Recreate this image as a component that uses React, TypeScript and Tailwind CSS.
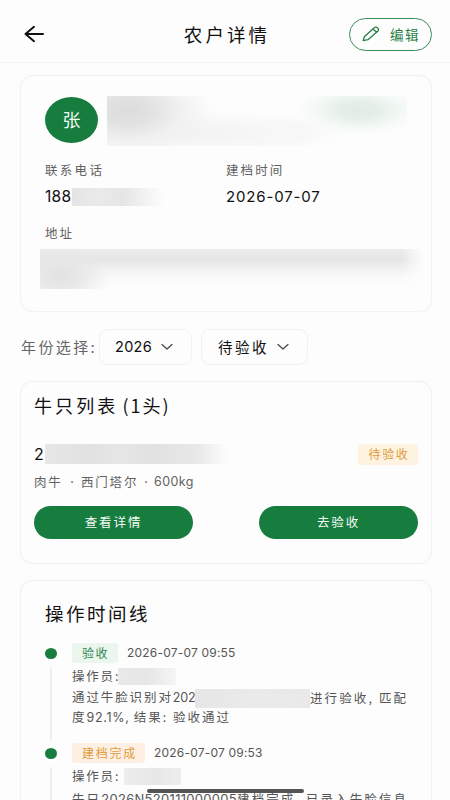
import type { ReactNode } from 'react';

const latin = "font-['Inter','Noto_Sans_CJK_SC',sans-serif]";

function Card({ className, children }: { className: string; children: ReactNode }) {
  return (
    <section className={`ml-5 w-[412px] rounded-[13px] border border-[#f2f2f2] bg-[#fdfdfd] shadow-[0_0_2px_#f5f5f5] ${className}`}>
      {children}
    </section>
  );
}

function Chevron() {
  return (
    <svg width="12" height="8" viewBox="0 0 12 8" fill="none" stroke="#444" strokeWidth="1.2" strokeLinecap="round" strokeLinejoin="round">
      <path d="M1 1.5 6 6l5-4.5" />
    </svg>
  );
}

function Redacted({ className }: { className: string }) {
  return <span aria-hidden="true" className={`block shrink-0 ${className}`} />;
}

function Dot() {
  return <span className="block h-[11px] w-[12px] shrink-0 rounded-[50%] bg-[#177d3e]" />;
}

export default function App() {
  return (
    <div className="relative h-[800px] w-[450px] overflow-hidden bg-[#fdfdfd] font-['Noto_Sans_CJK_SC',sans-serif] text-[#111]">
      <header className="flex h-[63px] items-center justify-between border-b border-[#f3f3f3] pt-[6px] pr-[18px] pl-6">
        <button className="flex w-[83px] items-center" aria-label="返回">
          <svg width="21" height="18" viewBox="0 0 21 18" fill="none" stroke="#111" strokeWidth="2" strokeLinecap="round" strokeLinejoin="round">
            <path d="M19 9H1.5M10 1.8 1.5 9l8.5 7.2" />
          </svg>
        </button>
        <h1 className="mr-[2px] text-[18.5px] leading-6 font-normal tracking-[3.1px]">农户详情</h1>
        <button className="flex h-[33px] w-[83px] items-center rounded-full border border-[#3b8d5a] pl-3 text-[#277f48]">
          <svg width="18" height="16" viewBox="0 0 18 16" fill="none" stroke="currentColor" strokeWidth="1.3" strokeLinejoin="round" strokeLinecap="round">
            <path d="M1.2 14.7 2.3 10.8 12 2c1-.9 2.7-.9 3.7 0s1 2.4 0 3.3L6 13.7 1.2 14.7ZM11 3l3.6 3.3" />
          </svg>
          <span className="ml-[10px] text-[13.5px] leading-5 tracking-[1.6px]">编辑</span>
        </button>
      </header>

      <Card className="mt-[12px] h-[237px] pt-5 pl-6">
        <div className="flex h-[50px]">
          <div className="mt-px flex h-[46px] w-[53px] items-center justify-center rounded-[50%] bg-[#177d3e] pb-[2px] text-[18px] text-[#f4faf6]">张</div>
          <Redacted className="ml-[9px] h-[50px] w-[300px] bg-[radial-gradient(ellipse_64px_26px_at_252px_14px,#e0ece4_0%,#e4efe7_30%,#f3f8f5_65%,transparent_100%),radial-gradient(ellipse_85px_46px_at_20px_15px,#dcdcdc_0%,#e2e2e2_30%,#f1f1f1_65%,transparent_100%),radial-gradient(ellipse_150px_24px_at_90px_38px,#f2f2f2_0%,#f8f8f8_60%,transparent_100%),radial-gradient(ellipse_40px_16px_at_176px_36px,#eeeeee_0%,transparent_100%)]" />
        </div>
        <dl className="mt-[14px] grid grid-cols-[181px_1fr]">
          <dt className="text-[12.5px] leading-5 tracking-[2.3px] text-[#626262]">联系电话</dt>
          <dt className="text-[12.5px] leading-5 tracking-[2.1px] text-[#626262]">建档时间</dt>
          <dd className={`mt-[6px] flex h-[22px] items-center text-[15.5px] leading-[22px] ${latin}`}>
            <span className="w-[27px] tracking-[0.3px]">188</span>
            <Redacted className="h-[18px] w-[92px] bg-[linear-gradient(90deg,#e4e4e4,#eaeaea_30%,#e5e5e5_55%,#f0f0f0_75%,#fdfdfd)]" />
          </dd>
          <dd className={`mt-[6px] text-[15px] leading-[22px] tracking-[0.85px] ${latin}`}>2026-07-07</dd>
          <dt className="mt-[15px] text-[12.5px] leading-5 tracking-[2.1px] text-[#626262]">地址</dt>
        </dl>
        <Redacted className="mt-[6px] -ml-[5px] h-[40px] w-[384px] bg-[linear-gradient(90deg,transparent_94%,#fdfdfd_100%),radial-gradient(ellipse_50px_34px_at_20px_26px,#e2e2e2_0%,#e8e8e8_40%,transparent_100%),linear-gradient(180deg,#ececec,#e6e6e6_28%,#f2f2f2_52%,#fafafa_72%,#fdfdfd)]" />
      </Card>

      <div className="mt-[17px] flex h-[36px] items-center pl-[21px]">
        <span className="w-[78px] text-[15px] leading-6 tracking-[2.4px] whitespace-nowrap text-[#666]">
          年份选择<span>:</span>
        </span>
        <button className="flex h-[36px] w-[93px] items-center justify-between rounded-[9px] border border-[#f1f1f1] pr-[18px] pl-[15px]">
          <span className={`text-[14.5px] leading-5 tracking-[0.3px] ${latin}`}>2026</span>
          <Chevron />
        </button>
        <button className="ml-[9px] flex h-[36px] w-[107px] items-center justify-between rounded-[9px] border border-[#f1f1f1] pr-[18px] pl-4">
          <span className="text-[14.5px] leading-5 tracking-[2.5px]">待验收</span>
          <Chevron />
        </button>
      </div>

      <Card className="mt-4 h-[183px] pt-[11px] pr-[13px] pl-[13px]">
        <h2 className="text-[18px] leading-6 font-normal tracking-[3.1px]">
          牛只列表<span className="ml-1 tracking-[2px]">(1头)</span>
        </h2>
        <div className="mt-[25px] flex h-[24px] items-center justify-between">
          <div className="flex items-center">
            <span className={`w-[11px] text-[16px] leading-5 ${latin}`}>2</span>
            <Redacted className="h-[20px] w-[183px] bg-[linear-gradient(90deg,#e7e7e7,#e1e1e1_25%,#e6e6e6_40%,#e1e1e1_60%,#e8e8e8_83%,#fdfdfd)]" />
          </div>
          <span className="flex h-[21px] w-[60px] items-center justify-center rounded-[3px] bg-[#fdf3e0] pb-px pl-[2px] text-[12px] leading-4 tracking-[1.7px] text-[#e19a3c]">待验收</span>
        </div>
        <p className="mt-[6px] flex h-5 items-center text-[12.5px] leading-5 tracking-[1.8px] whitespace-nowrap text-[#626262]">
          <span className="w-[30px]">肉牛</span>
          <span className={`w-[16px] text-center text-[14px] tracking-normal ${latin}`}>·</span>
          <span className="w-[58px] pl-px">西门塔尔</span>
          <span className={`w-[16px] text-center text-[14px] tracking-normal ${latin}`}>·</span>
          <span className={`text-[12.5px] tracking-[0.4px] ${latin}`}>600kg</span>
        </p>
        <div className="mt-[14px] flex justify-between">
          <button className="h-[33px] w-[159px] rounded-full bg-[#177d3e] pb-px text-[12.5px] leading-5 tracking-[1.9px] text-[#f4faf6]">查看详情</button>
          <button className="h-[33px] w-[159px] rounded-full bg-[#177d3e] pb-px text-[12.5px] leading-5 tracking-[1.9px] text-[#f4faf6]">去验收</button>
        </div>
      </Card>

      <Card className="mt-[16px] h-[240px] pt-5 pl-6">
        <h2 className="text-[18.5px] leading-6 font-normal tracking-[2.5px]">操作时间线</h2>
        <ol className="mt-[18px] text-[12.5px] text-[#555]">
          <li className="flex h-[100px]">
            <div className="flex w-[27px] flex-col">
              <span className="mt-[5px]"><Dot /></span>
              <span className="mt-[8px] ml-[5px] block h-[74px] w-[2px] bg-[#efefef]" />
            </div>
            <div>
              <div className="flex h-[20px] items-center">
                <span className="flex h-[20px] w-[46px] items-center justify-center rounded-[3px] bg-[#ebf6ef] pl-px text-[12px] tracking-[1.5px] text-[#2d8650]">验收</span>
                <time className={`ml-[9px] text-[12px] tracking-[0.2px] ${latin}`}>2026-07-07 09:55</time>
              </div>
              <div className="mt-[3px] flex h-[20px] items-center tracking-[1.8px]">
                <span className="w-[46px] whitespace-nowrap">操作员:</span>
                <Redacted className="h-[17px] w-[58px] bg-[linear-gradient(90deg,#e9e9e9,#e6e6e6_50%,#f5f5f5)]" />
              </div>
              <div className="mt-[2px] flex h-[20px] items-center tracking-[1.9px] whitespace-nowrap">
                <span className="w-[123px]">通过牛脸识别对<span className={`text-[12.5px] tracking-[-0.1px] ${latin}`}>202</span></span>
                <Redacted className="h-[19px] w-[115px] bg-[linear-gradient(90deg,#e6e6e6,#eaeaea_50%,#e9e9e9)]" />
                <span className="tracking-[2.1px]">进行验收, 匹配</span>
              </div>
              <p className="-mt-px h-[20px] leading-5 tracking-[2px] whitespace-nowrap">
                度<span className={`text-[12.5px] tracking-[0.7px] ${latin}`}>92.1%, </span>结果: 验收通过
              </p>
            </div>
          </li>
          <li className="flex">
            <div className="flex w-[27px] flex-col">
              <span className="mt-[5px]"><Dot /></span>
              <span className="mt-[8px] ml-[5px] block h-[50px] w-[2px] bg-[#efefef]" />
            </div>
            <div>
              <div className="flex h-[20px] items-center">
                <span className="flex h-[20px] w-[73px] items-center justify-center rounded-[3px] bg-[#fdf0e2] pl-[2px] text-[12px] tracking-[1.7px] text-[#e19a3c]">建档完成</span>
                <time className={`ml-[9px] text-[12px] tracking-[0.2px] ${latin}`}>2026-07-07 09:53</time>
              </div>
              <div className="mt-[3px] flex h-[20px] items-center tracking-[1.8px]">
                <span className="w-[52px] whitespace-nowrap">操作员:</span>
                <Redacted className="h-[17px] w-[57px] bg-[linear-gradient(90deg,#ededed,#e7e7e7_50%,#ededed)]" />
              </div>
              <p className="mt-[3px] h-[20px] leading-5 tracking-[2.1px] whitespace-nowrap">
                牛只<span className={`text-[13px] tracking-[0.3px] ${latin}`}>2026N520111000005</span>建档完成, 已录入牛脸信息
              </p>
            </div>
          </li>
        </ol>
      </Card>
      <div className="absolute top-[789px] left-[147px] h-[4px] w-[157px] rounded-full bg-[#555]" />
    </div>
  );
}
